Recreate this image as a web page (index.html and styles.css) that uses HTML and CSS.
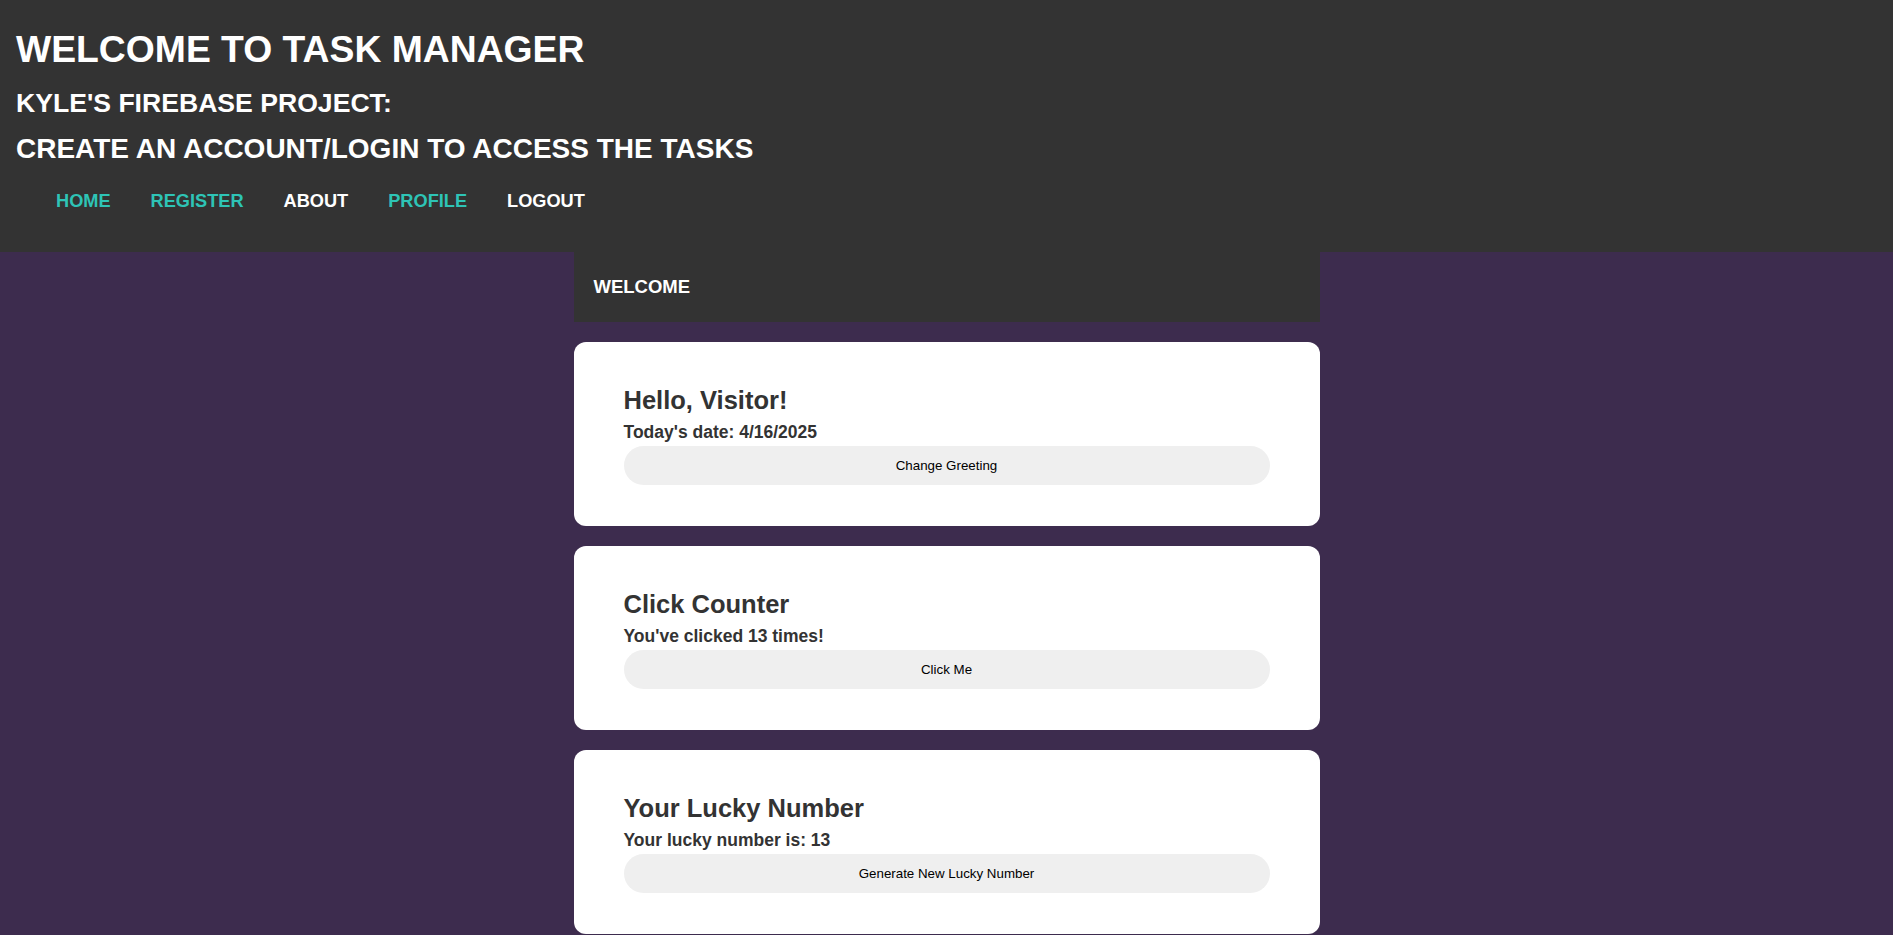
FILE: index.html
```html
<!DOCTYPE html>
<html lang="en">
<head>
<meta charset="utf-8">
<title>Task Manager</title>
<link rel="stylesheet" href="styles.css">
</head>
<body>
<header class="site-header">
  <h1 class="title">WELCOME TO TASK MANAGER</h1>
  <h2 class="subtitle sub-first">KYLE'S FIREBASE PROJECT:</h2>
  <h2 class="subtitle sub-second">CREATE AN ACCOUNT/LOGIN TO ACCESS THE TASKS</h2>
  <nav>
    <ul class="nav-list">
      <li><a class="nav-link teal" href="#">HOME</a></li>
      <li><a class="nav-link teal" href="#">REGISTER</a></li>
      <li><a class="nav-link" href="#">ABOUT</a></li>
      <li><a class="nav-link teal" href="#">PROFILE</a></li>
      <li><a class="nav-link" href="#">LOGOUT</a></li>
    </ul>
  </nav>
</header>
<main class="content">
  <div class="welcome-bar">WELCOME</div>
  <section class="card">
    <h3 class="card-title">Hello, Visitor!</h3>
    <p class="card-text">Today's date: 4/16/2025</p>
    <button class="card-btn">Change Greeting</button>
  </section>
  <section class="card">
    <h3 class="card-title">Click Counter</h3>
    <p class="card-text">You've clicked 13 times!</p>
    <button class="card-btn">Click Me</button>
  </section>
  <section class="card">
    <h3 class="card-title">Your Lucky Number</h3>
    <p class="card-text">Your lucky number is: 13</p>
    <button class="card-btn">Generate New Lucky Number</button>
  </section>
</main>
</body>
</html>
```
FILE: styles.css
```css
* {
  box-sizing: border-box;
}

html, body {
  margin: 0;
  padding: 0;
}

body {
  background: #3d2c4e;
  font-family: "Liberation Sans", Arial, sans-serif;
  overflow: hidden;
}

.site-header {
  background: #333333;
  height: 252px;
  padding: 27px 0 0 16px;
  color: #ffffff;
}

.title {
  margin: 0;
  font-size: 37.3px;
  line-height: 44px;
  font-weight: 700;
}

.subtitle {
  margin: 0;
  line-height: 36px;
  font-weight: 700;
}

.sub-first {
  margin-top: 14px;
  font-size: 26.6px;
}

.sub-second {
  margin-top: 10px;
  font-size: 28px;
}

.nav-list {
  list-style: none;
  margin: 23px 0 0 0;
  padding: 0 0 0 40px;
  display: flex;
  gap: 40px;
}

.nav-link {
  display: block;
  color: #ffffff;
  text-decoration: none;
  font-weight: 700;
  font-size: 18.2px;
  line-height: 22px;
}

.nav-link.teal {
  color: #2ec4b6;
}

.content {
  width: 746px;
  margin: 0 auto;
  display: flex;
  flex-direction: column;
  gap: 20px;
}

.welcome-bar {
  background: #333333;
  color: #ffffff;
  font-weight: 700;
  font-size: 18.5px;
  line-height: 22px;
  padding: 24px 20px;
}

.card {
  background: #ffffff;
  border-radius: 12px;
  padding: 43px 50px 41px;
  display: flex;
  flex-direction: column;
  color: #333333;
}

.card-title {
  margin: 0;
  font-size: 25.5px;
  line-height: 30px;
  font-weight: 700;
}

.card-text {
  margin: 7px 0 4px;
  font-size: 17.5px;
  line-height: 20px;
  font-weight: 700;
}

.card-btn {
  height: 39px;
  border: none;
  border-radius: 20px;
  background: #efefef;
  color: #000000;
  font-family: "Liberation Sans", Arial, sans-serif;
  font-size: 13.33px;
  cursor: pointer;
}
```
